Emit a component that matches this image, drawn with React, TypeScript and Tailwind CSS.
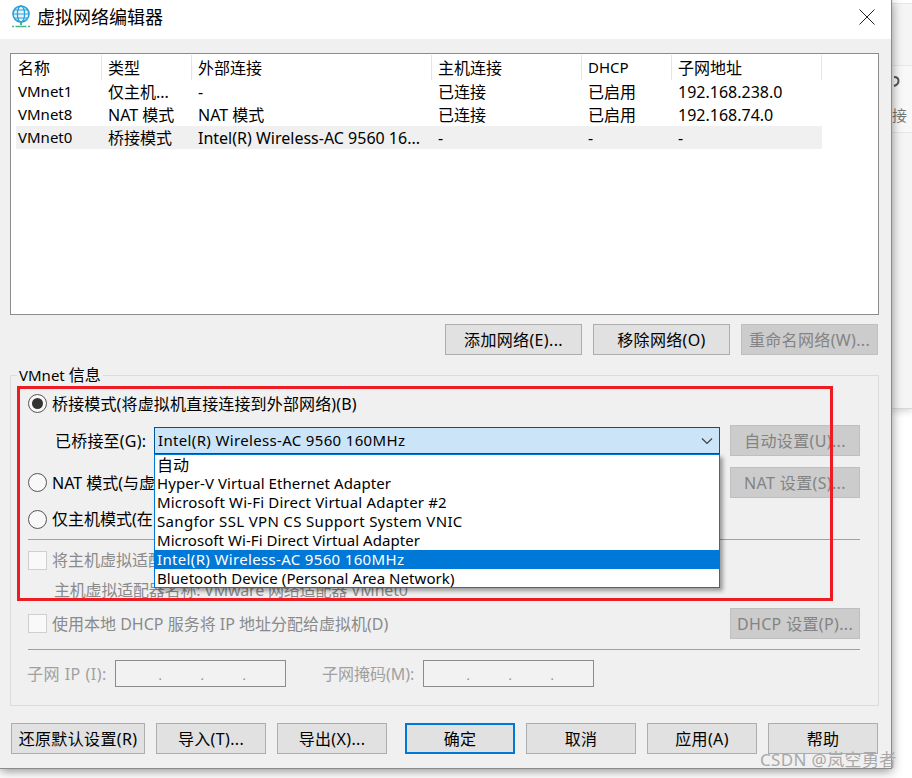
const columns = ["w-[86px] pl-0.5", "w-[90px] pl-1.5", "w-[240px] pl-1.5", "w-[150px] pl-1.5", "w-[90px] pl-1.5", "w-[150px] pl-1.5"];

const headers = ["名称", "类型", "外部连接", "主机连接", "DHCP", "子网地址"];

const rows = [
  ["VMnet1", "仅主机...", "-", "已连接", "已启用", "192.168.238.0"],
  ["VMnet8", "NAT 模式", "NAT 模式", "已连接", "已启用", "192.168.74.0"],
  ["VMnet0", "桥接模式", "Intel(R) Wireless-AC 9560 16...", "-", "-", "-"],
];

// each name has its own tracking: the reference's latin face has other widths
const adapters = [
  { name: "自动", cls: "text-[16px]" },
  { name: "Hyper-V Virtual Ethernet Adapter", cls: "tracking-[0.08px]" },
  { name: "Microsoft Wi-Fi Direct Virtual Adapter #2", cls: "tracking-[0.17px]" },
  { name: "Sangfor SSL VPN CS Support System VNIC", cls: "tracking-[0.33px]" },
  { name: "Microsoft Wi-Fi Direct Virtual Adapter", cls: "tracking-[0.06px]" },
  { name: "Intel(R) Wireless-AC 9560 160MHz", cls: "tracking-[0.34px]" },
  { name: "Bluetooth Device (Personal Area Network)", cls: "tracking-[0.07px]" },
];

function Btn({ label, className = "", disabled = false, primary = false }: { label: string; className?: string; disabled?: boolean; primary?: boolean }) {
  const look = disabled
    ? "bg-[#cccccc] border border-[#bfbfbf] text-[#838383]"
    : primary
      ? "bg-[#e1e1e1] border-2 border-[#0078d7] text-black"
      : "bg-[#e1e1e1] border border-[#adadad] text-black";
  return <div className={`h-[31px] flex items-center justify-center shrink-0 tracking-[0.35px] ${look} ${className}`}>{label}</div>;
}

function Radio({ checked = false }: { checked?: boolean }) {
  return (
    <div className="w-[19px] h-[19px] rounded-full border border-[#555555] bg-[#f8f8f8] flex items-center justify-center shrink-0">
      {checked && <div className="w-[11px] h-[11px] rounded-full bg-[#333333]" />}
    </div>
  );
}

function Check() {
  return <div className="w-[19px] h-[19px] border border-[#cfcfcf] bg-[#f9f9f9] shrink-0" />;
}

function IpBox() {
  return (
    <div className="w-[171px] h-[27px] border border-[#8c8c8c] bg-[#f2f2f2] flex pl-[4px] shrink-0">
      {[0, 1, 2].map((i) => (
        <div key={i} className="w-[42px] h-full flex items-center justify-end pt-1 text-[#b08a5c] text-[13px]">.</div>
      ))}
    </div>
  );
}

function Globe() {
  return (
    <svg width="20" height="24" viewBox="0 0 20 24" fill="none" className="shrink-0">
      <circle cx="10" cy="9" r="8" stroke="#2b9fd9" strokeWidth="1.6" fill="#e8f5fb" />
      <ellipse cx="10" cy="9" rx="3.6" ry="8" stroke="#2b9fd9" strokeWidth="1.3" />
      <path d="M2 9h16M3.2 5h13.6M3.2 13h13.6" stroke="#2b9fd9" strokeWidth="1.2" />
      <path d="M10 17v3" stroke="#4aa8a0" strokeWidth="2" />
      <path d="M1 21.5h2M4.5 21.5h11M17 21.5h2" stroke="#46b58a" strokeWidth="1.4" />
    </svg>
  );
}

export default function App() {
  return (
    <div className="relative w-[912px] h-[778px] overflow-hidden bg-white text-[16px] leading-none text-black font-['Noto_Sans','Noto_Sans_CJK_SC',sans-serif]">
      {/* window behind the dialog */}
      <div className="absolute right-0 top-0 w-[20px] h-[409px] bg-[#f5f5f5] border-b border-[#d8d8d8] shadow-[0_3px_6px_rgba(0,0,0,0.15)]">
        <div className="h-[4px] bg-white border-b border-[#e6e6e6]" />
        <div className="h-[62px] border-b border-[#e6e6e6]" />
        <div className="relative h-[67px] bg-[#f8f8f8] border-b border-[#e6e6e6] pt-[42px] text-[15px] text-[#777777] whitespace-nowrap">
          <svg width="8" height="11" viewBox="0 0 8 11" fill="none" className="absolute left-0 top-[10px]">
            <path d="M2 1c3 0 4.500 1.500 4.500 4S5 9 2 10" stroke="#555555" strokeWidth="2" />
          </svg>
          接
        </div>
      </div>

      <div className="relative w-[892px] h-[769px] bg-[#f0f0f0] border-r border-b border-[#8a8a8a] shadow-[0_2px_10px_rgba(0,0,0,0.45)]">
        {/* title bar */}
        <div className="h-[39px] bg-white flex items-center pl-[11px] pr-[16px] pb-[6px]">
          <Globe />
          <span className="ml-[6px] text-[18px]">虚拟网络编辑器</span>
          <svg width="16" height="16" viewBox="0 0 16 16" className="ml-auto" fill="none">
            <path d="M0.5 0.500l15 15M15.500 0.500l-15 15" stroke="#222222" strokeWidth="1" />
          </svg>
        </div>

        <div className="px-[10px] pt-[14px]">
          {/* network list */}
          <div className="h-[262px] w-[869px] bg-white border border-[#8c8c8c] pt-[1px] pl-[5px]">
            <div className="flex h-[25px] w-[806px]">
              {headers.map((h, i) => (
                <div key={h} className={`${columns[i]} flex items-center border-r border-[#e5e5e5] ${h === "DHCP" ? "text-[15px]" : ""}`}>{h}</div>
              ))}
            </div>
            {rows.map((row, r) => (
              <div key={r} className={`flex h-[23px] w-[806px] ${r === 2 ? "bg-[#f0f0f0]" : ""}`}>
                {row.map((cell, i) => (
                  <div key={i} className={`${columns[i]} flex items-center whitespace-nowrap overflow-hidden ${i === 0 ? "text-[15px]" : ""}`}>{cell}</div>
                ))}
              </div>
            ))}
          </div>

          <div className="flex justify-end gap-[11px] mt-[9px] w-[868px]">
            <Btn label="添加网络(E)..." className="w-[137px]" />
            <Btn label="移除网络(O)" className="w-[137px]" />
            <Btn label="重命名网络(W)..." className="w-[137px]" disabled />
          </div>

          {/* VMnet info group */}
          <div className="relative mt-[20px] w-[869px] h-[331px] border border-[#dcdcdc] pl-[17px] pr-[18px] pt-[16px]">
            <span className="absolute left-[6px] top-[-11px] bg-[#f0f0f0] px-[2px] h-[20px] flex items-center whitespace-pre"><span className="text-[15px]">VMnet </span>信息</span>

            <div className="h-[22px] flex items-center gap-[5px]">
              <Radio checked />
              <span className="tracking-[0.14px] pt-[2px]">桥接模式(将虚拟机直接连接到外部网络)(B)</span>
            </div>

            <div className="mt-[11px] h-[31px] flex items-center">
              <span className="w-[126px] pl-[27px] shrink-0 whitespace-nowrap tracking-[0.2px]">已桥接至(G):</span>
              <div className="w-[566px] h-[27px] bg-[#cce4f7] border border-[#005499] flex items-center pl-[3px] pr-[6px] shrink-0">
                <span className="text-[15px] tracking-[0.34px]">Intel(R) Wireless-AC 9560 160MHz</span>
                <svg width="12" height="8" viewBox="0 0 12 8" fill="none" className="ml-auto">
                  <path d="M1 1.500l5 5 5-5" stroke="#404040" strokeWidth="1.2" />
                </svg>
              </div>
              <Btn label="自动设置(U)..." className="w-[130px] ml-[10px]" disabled />
            </div>

            {/* the dropdown covers the rest of these three labels */}
            <div className="mt-[11px] h-[31px] flex items-center gap-[5px]">
              <Radio />
              <span className="whitespace-nowrap">NAT 模式(与虚</span>
              <Btn label="NAT 设置(S)..." className="w-[130px] ml-auto" disabled />
            </div>

            <div className="mt-[10px] h-[22px] flex items-center gap-[5px]">
              <Radio />
              <span className="whitespace-nowrap">仅主机模式(在</span>
            </div>

            <div className="mt-[9px] h-px bg-[#a0a0a0]" />

            <div className="mt-[9px] h-[22px] flex items-center gap-[5px] text-[#8a8a8a]">
              <Check />
              <span className="whitespace-nowrap">将主机虚拟适配</span>
            </div>

            <div className="mt-[8px] h-[22px] flex items-center pl-[26px] text-[#8a8a8a] whitespace-nowrap tracking-[-0.2px]">主机虚拟适配器名称: VMware 网络适配器 VMnet0</div>

            <div className="mt-[7px] h-[31px] flex items-center gap-[5px] text-[#8a8a8a]">
              <Check />
              <span>使用本地 DHCP 服务将 IP 地址分配给虚拟机(D)</span>
              <Btn label="DHCP 设置(P)..." className="w-[130px] ml-auto" disabled />
            </div>

            <div className="mt-[10px] h-px bg-[#a0a0a0]" />

            <div className="mt-[10px] h-[27px] flex items-center text-[#a0a0a0]">
              <span className="w-[87px] shrink-0 whitespace-nowrap tracking-[0.5px] -ml-px pr-[1px]">子网 IP (I):</span>
              <span className="w-px" />
              <IpBox />
              <span className="w-[100px] ml-[37px] shrink-0 whitespace-nowrap -translate-x-px">子网掩码(M):</span>
              <IpBox />
            </div>
          </div>

          <div className="flex mt-[17px] w-[868px]">
            <Btn label="还原默认设置(R)" className="w-[134px] ml-[1px]" />
            <Btn label="导入(T)..." className="w-[110px] ml-[11px]" />
            <Btn label="导出(X)..." className="w-[110px] ml-[11px]" />
            <Btn label="确定" className="w-[110px] ml-[18px]" primary />
            <Btn label="取消" className="w-[110px] ml-[11px]" />
            <Btn label="应用(A)" className="w-[110px] ml-[11px]" />
            <Btn label="帮助" className="w-[110px] ml-[11px]" />
          </div>
        </div>
      </div>

      {/* open dropdown of the combo box */}
      <div className="absolute left-[154px] top-[454px] w-[566px] h-[134px] bg-white border border-[#0078d7] text-[15px] shadow-[3px_3px_4px_rgba(0,0,0,0.35)]">
        {adapters.map((a, i) => (
          <div key={a.name} className={`h-[19px] flex items-center pl-[2px] whitespace-nowrap ${a.cls} ${i === 5 ? "bg-[#0078d7] text-white" : ""}`}>{a.name}</div>
        ))}
      </div>

      {/* hand-drawn red annotation */}
      <div className="absolute left-[17px] top-[386px] w-[816px] h-[215px] border-[3px] border-[#ed1c24]" />

      {/* watermark */}
      <div className="absolute left-[760px] top-[750px] text-[17px] leading-[20px] text-[#a8a8a8] whitespace-nowrap tracking-[0.35px]">CSDN @岚空勇者</div>
    </div>
  );
}
